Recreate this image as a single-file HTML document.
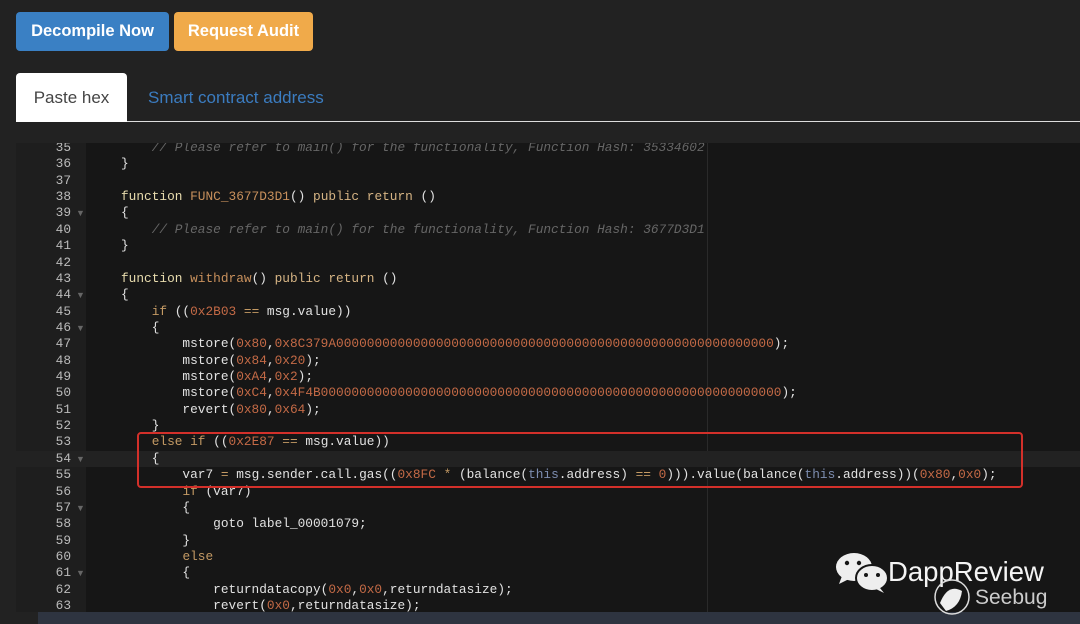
<!DOCTYPE html>
<html><head><meta charset="utf-8"><style>
*{margin:0;padding:0;box-sizing:border-box}
body{width:1080px;height:624px;background:#222;overflow:hidden;position:relative;font-family:"Liberation Sans",sans-serif}
.btn{position:absolute;top:12px;height:39px;border-radius:4px;color:#fff;font-weight:bold;font-size:16.5px;line-height:39px;text-align:center}
.tab{position:absolute;left:16px;top:73px;width:111px;height:49px;background:#fff;border-radius:4px 4px 0 0;color:#444;font-size:17px;line-height:49px;text-align:center}
.tab2{position:absolute;left:148px;top:73px;line-height:49px;font-size:17px;color:#3b7cc0}
.hr{position:absolute;left:127px;top:121px;right:0;height:1px;background:#ddd}
.ed{position:absolute;left:16px;top:143px;width:1064px;height:469px;background:#161616;overflow:hidden}
.gut{position:absolute;left:0;top:0;width:70px;height:100%;background:#1e1e1e}
.pm{position:absolute;left:691px;top:0;width:1px;height:100%;background:#2a2a2a}
.act{position:absolute;left:0;width:1064px;height:16.36px;background:#222}
.ln{position:absolute;left:0;width:55px;text-align:right;color:#bbb}
.fd{position:absolute;left:60px;color:#666;font-size:9px}
.cd{position:absolute;left:105px;white-space:pre;color:#e2e2e2}
.ln,.cd{font-family:"Liberation Mono",monospace;font-size:12.8px;line-height:16.36px;height:16.36px}
.k{color:#e8dcae}.f{color:#c8905c}.p{color:#d6b484}.n{color:#c46a46}.c{color:#666;font-style:italic}.t{color:#7d8db0}.o{color:#c49a64}
.box{position:absolute;left:137px;top:432px;width:886px;height:56px;border:2.5px solid #d3302a;border-radius:4px}
.bot{position:absolute;left:38px;top:612px;right:0;height:12px;background:#2e3440}
</style></head><body>
<div class="btn" style="left:16px;width:153px;background:#3a80c4">Decompile Now</div>
<div class="btn" style="left:174px;width:139px;background:#f0aa4a">Request Audit</div>
<div class="tab">Paste hex</div>
<div class="tab2">Smart contract address</div>
<div class="hr"></div>
<div class="ed" id="ed"><div class="gut"></div><div class="pm"></div></div>
<div class="box"></div>
<div class="bot"></div>
<svg style="position:absolute;left:834px;top:552px" width="60" height="42" viewBox="0 0 60 42">
<ellipse cx="20" cy="15" rx="18" ry="14" fill="#eee"/><path d="M8 24 L5 32 L15 27Z" fill="#eee"/>
<ellipse cx="38" cy="26" rx="16" ry="13" fill="#eee" stroke="#161616" stroke-width="2"/><path d="M46 36 L50 41 L42 37Z" fill="#eee"/>
<circle cx="13" cy="11" r="2.2" fill="#161616"/><circle cx="25" cy="11" r="2.2" fill="#161616"/>
<circle cx="32" cy="23" r="2" fill="#161616"/><circle cx="44" cy="23" r="2" fill="#161616"/></svg>
<div style="position:absolute;left:888px;top:556px;font-size:27.5px;color:#f4f4f4">DappReview</div>
<svg style="position:absolute;left:932px;top:577px" width="40" height="40"><circle cx="20" cy="20" r="17" fill="none" stroke="#ddd" stroke-width="1.5"/><path d="M8 26 Q16 6 30 14 Q28 30 14 34Z" fill="#eee"/></svg>
<div style="position:absolute;left:975px;top:586px;font-size:21px;color:#ccc">Seebug</div>
<script>
const L={35:'    <i class="c">// Please refer to main() for the functionality, Function Hash: 35334602</i>',36:'}',37:'',
38:'<i class="k">function</i> <i class="f">FUNC_3677D3D1</i>() <i class="p">public return</i> ()',39:'{',
40:'    <i class="c">// Please refer to main() for the functionality, Function Hash: 3677D3D1</i>',41:'}',42:'',
43:'<i class="k">function</i> <i class="f">withdraw</i>() <i class="p">public return</i> ()',44:'{',
45:'    <i class="o">if</i> ((<i class="n">0x2B03</i> <i class="o">==</i> msg.value))',46:'    {',
47:'        mstore(<i class="n">0x80</i>,<i class="n">0x8C379A000000000000000000000000000000000000000000000000000000000</i>);',
48:'        mstore(<i class="n">0x84</i>,<i class="n">0x20</i>);',49:'        mstore(<i class="n">0xA4</i>,<i class="n">0x2</i>);',
50:'        mstore(<i class="n">0xC4</i>,<i class="n">0x4F4B000000000000000000000000000000000000000000000000000000000000</i>);',
51:'        revert(<i class="n">0x80</i>,<i class="n">0x64</i>);',52:'    }',
53:'    <i class="o">else if</i> ((<i class="n">0x2E87</i> <i class="o">==</i> msg.value))',54:'    {',
55:'        var7 <i class="o">=</i> msg.sender.call.gas((<i class="n">0x8FC</i> <i class="o">*</i> (balance(<i class="t">this</i>.address) <i class="o">==</i> <i class="n">0</i>))).value(balance(<i class="t">this</i>.address))(<i class="n">0x80</i>,<i class="n">0x0</i>);',
56:'        <i class="o">if</i> (var7)',57:'        {',58:'            goto label_00001079;',59:'        }',60:'        <i class="o">else</i>',61:'        {',
62:'            returndatacopy(<i class="n">0x0</i>,<i class="n">0x0</i>,returndatasize);',63:'            revert(<i class="n">0x0</i>,returndatasize);'};
const folds=[39,44,46,54,57,61];let h='';
for(let n=35;n<=63;n++){const y=(n-35)*16.36-3;
if(n==54)h+=`<div class="act" style="top:${y}px"></div>`;
h+=`<div class="ln" style="top:${y}px">${n}</div>`;
if(folds.includes(n))h+=`<div class="fd" style="top:${y+3}px">&#9660;</div>`;
h+=`<div class="cd" style="top:${y}px">${L[n]}</div>`;}
document.getElementById('ed').insertAdjacentHTML('beforeend',h);
document.querySelectorAll('i').forEach(e=>{if(!e.classList.contains('c'))e.style.fontStyle='normal'});
</script>
</body></html>
